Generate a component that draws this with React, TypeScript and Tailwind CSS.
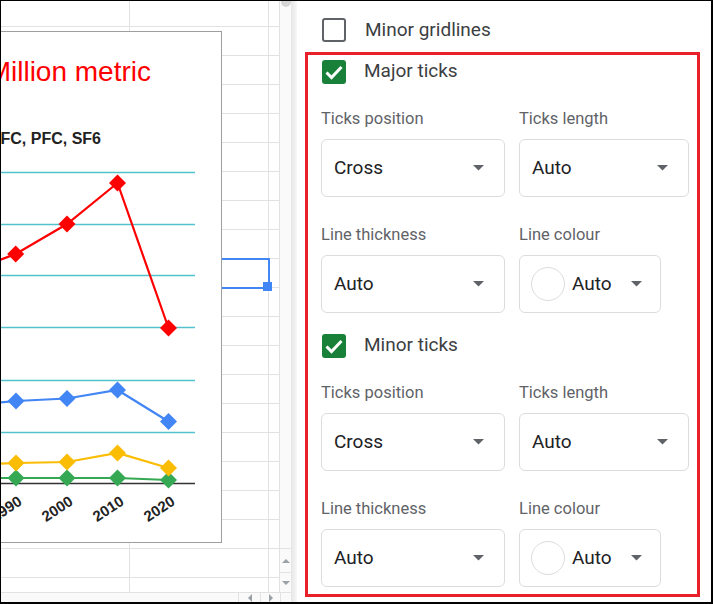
import React from "react";

const rowHeights = [
  "h-[26px]",
  ...Array(19).fill("h-[29px]"),
];

const red = [
  [-35, 273],
  [15.7, 254],
  [67, 224],
  [117.5, 183],
  [168.5, 328],
];
const blue = [
  [-35, 406],
  [16, 401],
  [67, 398.5],
  [117.5, 390],
  [168.5, 421.5],
];
const yellow = [
  [-35, 465],
  [16, 463],
  [67, 462],
  [117.5, 453],
  [168.5, 468],
];
const green = [
  [-35, 478],
  [16, 478],
  [67, 478],
  [117.5, 478],
  [168.5, 480],
];

const Series = ({ pts, color }: { pts: number[][]; color: string }) => (
  <g>
    <polyline
      points={pts.map((p) => p.join(",")).join(" ")}
      fill="none"
      stroke={color}
      strokeWidth={2.2}
    />
    {pts.map(([x, y], i) => (
      <path key={i} d={`M${x} ${y - 8.5}l8.5 8.5l-8.5 8.5l-8.5 -8.5z`} fill={color} />
    ))}
  </g>
);

const Chart = () => (
  <svg
    className="absolute left-[-1px] top-[-1px]"
    width={280}
    height={592}
    viewBox="0 0 280 592"
    style={{ fontFamily: '"Liberation Sans", Arial, sans-serif' }}
  >
    <rect x={-10} y={31.5} width={231.5} height={511} fill="#fff" stroke="#9e9e9e" />
    <text x={151} y={81} textAnchor="end" fontSize={28} fill="#ff0000">
      Million metric
    </text>
    <text x={101} y={144} textAnchor="end" fontSize={16} fontWeight="bold" fill="#222">
      HFC, PFC, SF6
    </text>
    {[172.5, 224.5, 275.5, 327.5, 380.5, 432.5].map((y) => (
      <line key={y} x1={-10} x2={195} y1={y} y2={y} stroke="#52c2cc" strokeWidth={1.5} />
    ))}
    <line x1={-10} x2={195} y1={483.5} y2={483.5} stroke="#333" strokeWidth={1.5} />
    <Series pts={green} color="#34a853" />
    <Series pts={yellow} color="#fbbc04" />
    <Series pts={blue} color="#4285f4" />
    <Series pts={red} color="#ff0000" />
    {[
      ["1990", 23],
      ["2000", 74],
      ["2010", 125],
      ["2020", 176],
    ].map(([label, x]) => (
      <text
        key={label}
        x={x}
        y={504}
        textAnchor="end"
        fontSize={15}
        fontWeight="bold"
        fill="#222"
        transform={`rotate(-33 ${x} 504)`}
      >
        {label}
      </text>
    ))}
  </svg>
);

const Caret = () => (
  <svg width="11" height="6" viewBox="0 0 11 6">
    <path d="M0 0h11l-5.5 5.5z" fill="#5f6368" />
  </svg>
);

const Checkbox = ({ checked }: { checked?: boolean }) =>
  checked ? (
    <div className="w-[24px] h-[24px] rounded-[3px] bg-[#188038] flex items-center justify-center">
      <svg width="24" height="24" viewBox="0 0 24 24">
        <path d="M4.5 12.5l5 5l10 -10.5" fill="none" stroke="#fff" strokeWidth="3" />
      </svg>
    </div>
  ) : (
    <div className="w-[24px] h-[24px] rounded-[3px] border-2 border-[#5f6368]" />
  );

const Select = ({ value, width }: { value: string; width: string }) => (
  <div
    className={`${width} h-[58px] border border-[#dadce0] rounded-[6px] flex items-center justify-between pl-[12px] pr-[20px] text-[19px] text-[#202124]`}
  >
    <span>{value}</span>
    <Caret />
  </div>
);

const ColourSelect = () => (
  <div className="w-[142px] h-[58px] border border-[#dadce0] rounded-[6px] flex items-center pl-[11px] text-[19px] text-[#202124]">
    <div className="w-[34px] h-[34px] rounded-full border border-[#dadce0]" />
    <span className="ml-[7px]">Auto</span>
    <span className="ml-[19px]">
      <Caret />
    </span>
  </div>
);

const TickSection = ({ title, first }: { title: string; first?: boolean }) => (
  <div className={first ? "mt-[4px]" : "mt-[20px]"}>
    <div className="flex items-center gap-[18px] h-[25px] ml-px">
      <Checkbox checked />
      <span className="text-[19px] text-[#3c4043]">{title}</span>
    </div>
    <div className="flex gap-[14px] mt-[25px] h-[20px] text-[16.5px] leading-[20px] text-[#5f6368]">
      <span className="w-[184px]">Ticks position</span>
      <span>Ticks length</span>
    </div>
    <div className="flex gap-[14px] mt-[10px]">
      <Select value="Cross" width="w-[184px]" />
      <Select value="Auto" width="w-[170px]" />
    </div>
    <div className="flex gap-[14px] mt-[28px] h-[20px] text-[16.5px] leading-[20px] text-[#5f6368]">
      <span className="w-[184px]">Line thickness</span>
      <span>Line colour</span>
    </div>
    <div className="flex gap-[14px] mt-[10px]">
      <Select value="Auto" width="w-[184px]" />
      <ColourSelect />
    </div>
  </div>
);

export default function App() {
  return (
    <div className="w-[713px] h-[604px] flex border-t border-l border-r-2 border-b-2 border-black bg-white overflow-hidden font-['Roboto',sans-serif]">
      {/* spreadsheet side */}
      <div className="w-[290px] flex flex-col">
        <div className="flex h-[591px]">
          <div className="relative w-[279px] overflow-hidden">
            {rowHeights.map((h, i) => (
              <div key={i} className={`flex ${h} border-b border-[#e2e2e2]`}>
                <div className="w-[129px] border-r border-[#e2e2e2]" />
                <div className="w-[139px] border-r border-[#e2e2e2]" />
                <div className="w-[11px] border-r border-[#e2e2e2]" />
              </div>
            ))}
            <div className="flex h-[14px]">
              <div className="w-[129px] border-r border-[#e2e2e2]" />
              <div className="w-[139px] border-r border-[#e2e2e2]" />
              <div className="w-[11px] border-r border-[#e2e2e2]" />
            </div>
            {/* selected cell */}
            <div className="absolute left-[198px] top-[257px] w-[71px] h-[31px] border-2 border-[#4285f4]" />
            <div className="absolute left-[262px] top-[281px] w-[9px] h-[9px] bg-[#4285f4]" />
            <Chart />
          </div>
          {/* vertical scrollbar */}
          <div className="w-[11px] flex flex-col bg-[#fafafa]">
            <div className="mx-auto w-[10px] h-[6px] rounded-b-full bg-[#d5d5d5]" />
            <div className="flex-1" />
            <div className="h-[24px] border-t border-[#e2e2e2] flex items-center justify-center">
              <div className="border-x-[4px] border-b-[4px] border-x-transparent border-b-[#9aa0a6]" />
            </div>
            <div className="h-[20px] border-t border-[#e2e2e2] flex items-center justify-center">
              <div className="border-x-[4px] border-t-[4px] border-x-transparent border-t-[#9aa0a6]" />
            </div>
          </div>
        </div>
        {/* horizontal scrollbar */}
        <div className="flex h-[10px] border-t border-[#e2e2e2] bg-[#fafafa]">
          <div className="w-[238px] border-r border-[#e2e2e2]" />
          <div className="w-[22px] border-r border-[#e2e2e2] flex items-center justify-center">
            <div className="border-y-[4px] border-r-[4px] border-y-transparent border-r-[#9aa0a6]" />
          </div>
          <div className="w-[20px] border-r border-[#e2e2e2] flex items-center justify-center">
            <div className="border-y-[4px] border-l-[4px] border-y-transparent border-l-[#9aa0a6]" />
          </div>
        </div>
      </div>

      {/* panel shadow */}
      <div className="w-[6px] bg-linear-to-r from-[#e6e6e6] to-[#f7f7f7]" />

      {/* side panel */}
      <div className="w-[414px] pt-[17px]">
        <div className="flex items-center gap-[19px] h-[24px] pl-[25px]">
          <Checkbox />
          <span className="text-[19px] text-[#3c4043]">Minor gridlines</span>
        </div>
        <div className="ml-[8px] mt-[10px] w-[395px] h-[545px] border-[3px] border-[#e8202a] pl-[13px]">
          <TickSection title="Major ticks" first />
          <TickSection title="Minor ticks" />
        </div>
      </div>
    </div>
  );
}
